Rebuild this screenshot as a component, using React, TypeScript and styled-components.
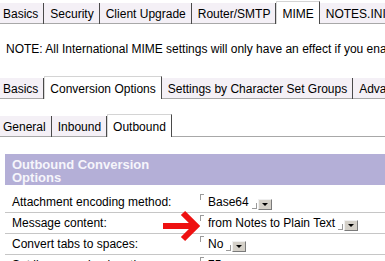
import React from "react";
import styled, { createGlobalStyle } from "styled-components";

const Global = createGlobalStyle`
  html, body {
    margin: 0;
    padding: 0;
    background: #ffffff;
  }
  body {
    width: 385px;
    height: 261px;
    overflow: hidden;
    font-family: "Liberation Sans", Arial, sans-serif;
    font-size: 12px;
    color: #000;
  }
`;

const Page = styled.div`
  width: 385px;
  height: 261px;
  overflow: hidden;
  position: relative;
`;

const TabStrip = styled.div<{ $top: number }>`
  display: flex;
  align-items: flex-end;
  height: 23px;
  margin-top: ${(p) => p.$top}px;
  margin-left: -3px;
  white-space: nowrap;
`;

const Tab = styled.div<{ $active?: boolean }>`
  flex: 0 0 auto;
  display: flex;
  align-items: center;
  box-sizing: border-box;
  height: ${(p) => (p.$active ? 23 : 21)}px;
  padding: ${(p) => (p.$active ? "2px 5px 0 5px" : "0 5px 0 6px")};
  background: ${(p) => (p.$active ? "#ffffff" : "#f4f0f6")};
  border-right: 1px solid #4a4a4a;
  box-shadow: ${(p) => (p.$active ? "none" : "inset 0 -1px 0 #a8a8a8")};
  border-top: ${(p) => (p.$active ? "1px solid #d4d4d4" : "none")};
  border-left: ${(p) => (p.$active ? "1px solid #d8d8d8" : "none")};
  color: #000;
`;

const Filler = styled.div<{ $line?: boolean }>`
  flex: 1 1 auto;
  align-self: stretch;
  border-bottom: ${(p) => (p.$line ? "1px solid #a8a8a8" : "none")};
`;

const Note = styled.div`
  margin-top: 18px;
  padding-left: 6px;
  line-height: 14px;
  white-space: nowrap;
`;

const Table = styled.div`
  margin-top: 17px;
  margin-left: 5px;
  display: grid;
  grid-template-columns: 192px 1fr;
`;

const HeaderCell = styled.div`
  background: #b4afd7;
  height: 31px;
  box-sizing: border-box;
  padding: 4px 7px 0 7px;
  font-size: 13px;
  font-weight: bold;
  line-height: 13px;
  color: #f6f5fb;
`;

const Cell = styled.div<{ $first?: boolean }>`
  display: flex;
  align-items: center;
  box-sizing: border-box;
  height: ${(p) => (p.$first ? 28 : 21)}px;
  padding-top: ${(p) => (p.$first ? 7 : 0)}px;
  border-bottom: 1px solid #c6c6c6;
  white-space: nowrap;
`;

const Label = styled(Cell)`
  padding-left: 7px;
`;

const Value = styled(Cell)`
  padding-left: 3px;
`;

const Field = styled.div`
  display: flex;
  align-items: center;
  height: 20px;
`;

const CornerTL = styled.span`
  align-self: flex-start;
  width: 3px;
  height: 5px;
  margin-top: 2px;
  margin-right: 4px;
  border-top: 1px solid #9a9a9a;
  border-left: 1px solid #9a9a9a;
`;

const CornerBR = styled.span`
  align-self: flex-end;
  width: 4px;
  height: 5px;
  margin: 0 1px 3px 3px;
  border-bottom: 1px solid #9a9a9a;
  border-right: 1px solid #9a9a9a;
`;

const DropButton = styled.span`
  display: flex;
  align-items: center;
  justify-content: center;
  box-sizing: border-box;
  width: 14px;
  height: 11px;
  margin-top: 4px;
  background: #d4d0c8;
  border-top: 1px solid #f0f0f0;
  border-left: 1px solid #f0f0f0;
  border-right: 1px solid #7a7a7a;
  border-bottom: 1px solid #7a7a7a;

  &::after {
    content: "";
    width: 0;
    height: 0;
    border-left: 3px solid transparent;
    border-right: 3px solid transparent;
    border-top: 3px solid #000;
  }
`;

const Arrow = styled.svg`
  position: absolute;
  left: 162px;
  top: 210px;
`;

type Row = { label: string; value: string };

const rows: Row[] = [
  { label: "Attachment encoding method:", value: "Base64" },
  { label: "Message content:", value: "from Notes to Plain Text" },
  { label: "Convert tabs to spaces:", value: "No" },
  { label: "Set line wrapping length:", value: "75" },
];

export default function App() {
  return (
    <Page>
      <Global />
      <TabStrip $top={1}>
        <Tab>Basics</Tab>
        <Tab>Security</Tab>
        <Tab>Client Upgrade</Tab>
        <Tab>Router/SMTP</Tab>
        <Tab $active>MIME</Tab>
        <Tab>NOTES.INI Settings</Tab>
        <Tab>Miscellaneous</Tab>
      </TabStrip>

      <Note>
        NOTE: All International MIME settings will only have an effect if you
        enable MIME conversion
      </Note>

      <TabStrip $top={20}>
        <Tab>Basics</Tab>
        <Tab $active>Conversion Options</Tab>
        <Tab>Settings by Character Set Groups</Tab>
        <Tab>Advanced</Tab>
      </TabStrip>

      <TabStrip $top={15}>
        <Tab>General</Tab>
        <Tab>Inbound</Tab>
        <Tab $active>Outbound</Tab>
        <Filler $line />
      </TabStrip>

      <Table>
        <HeaderCell>Outbound Conversion Options</HeaderCell>
        <HeaderCell />
        {rows.map((r, i) => (
          <React.Fragment key={r.label}>
            <Label $first={i === 0}>{r.label}</Label>
            <Value $first={i === 0}>
              <Field>
                <CornerTL />
                {r.value}
                {i < 3 && <CornerBR />}
                {i < 3 && <DropButton />}
              </Field>
            </Value>
          </React.Fragment>
        ))}
      </Table>

      <Arrow width="38" height="32" viewBox="0 0 38 32">
        <path d="M1 16 H30" stroke="#ee1111" strokeWidth="6" fill="none" />
        <path
          d="M21 3 L34 16 L21 29"
          stroke="#ee1111"
          strokeWidth="6"
          fill="none"
          strokeLinejoin="miter"
        />
      </Arrow>
    </Page>
  );
}
